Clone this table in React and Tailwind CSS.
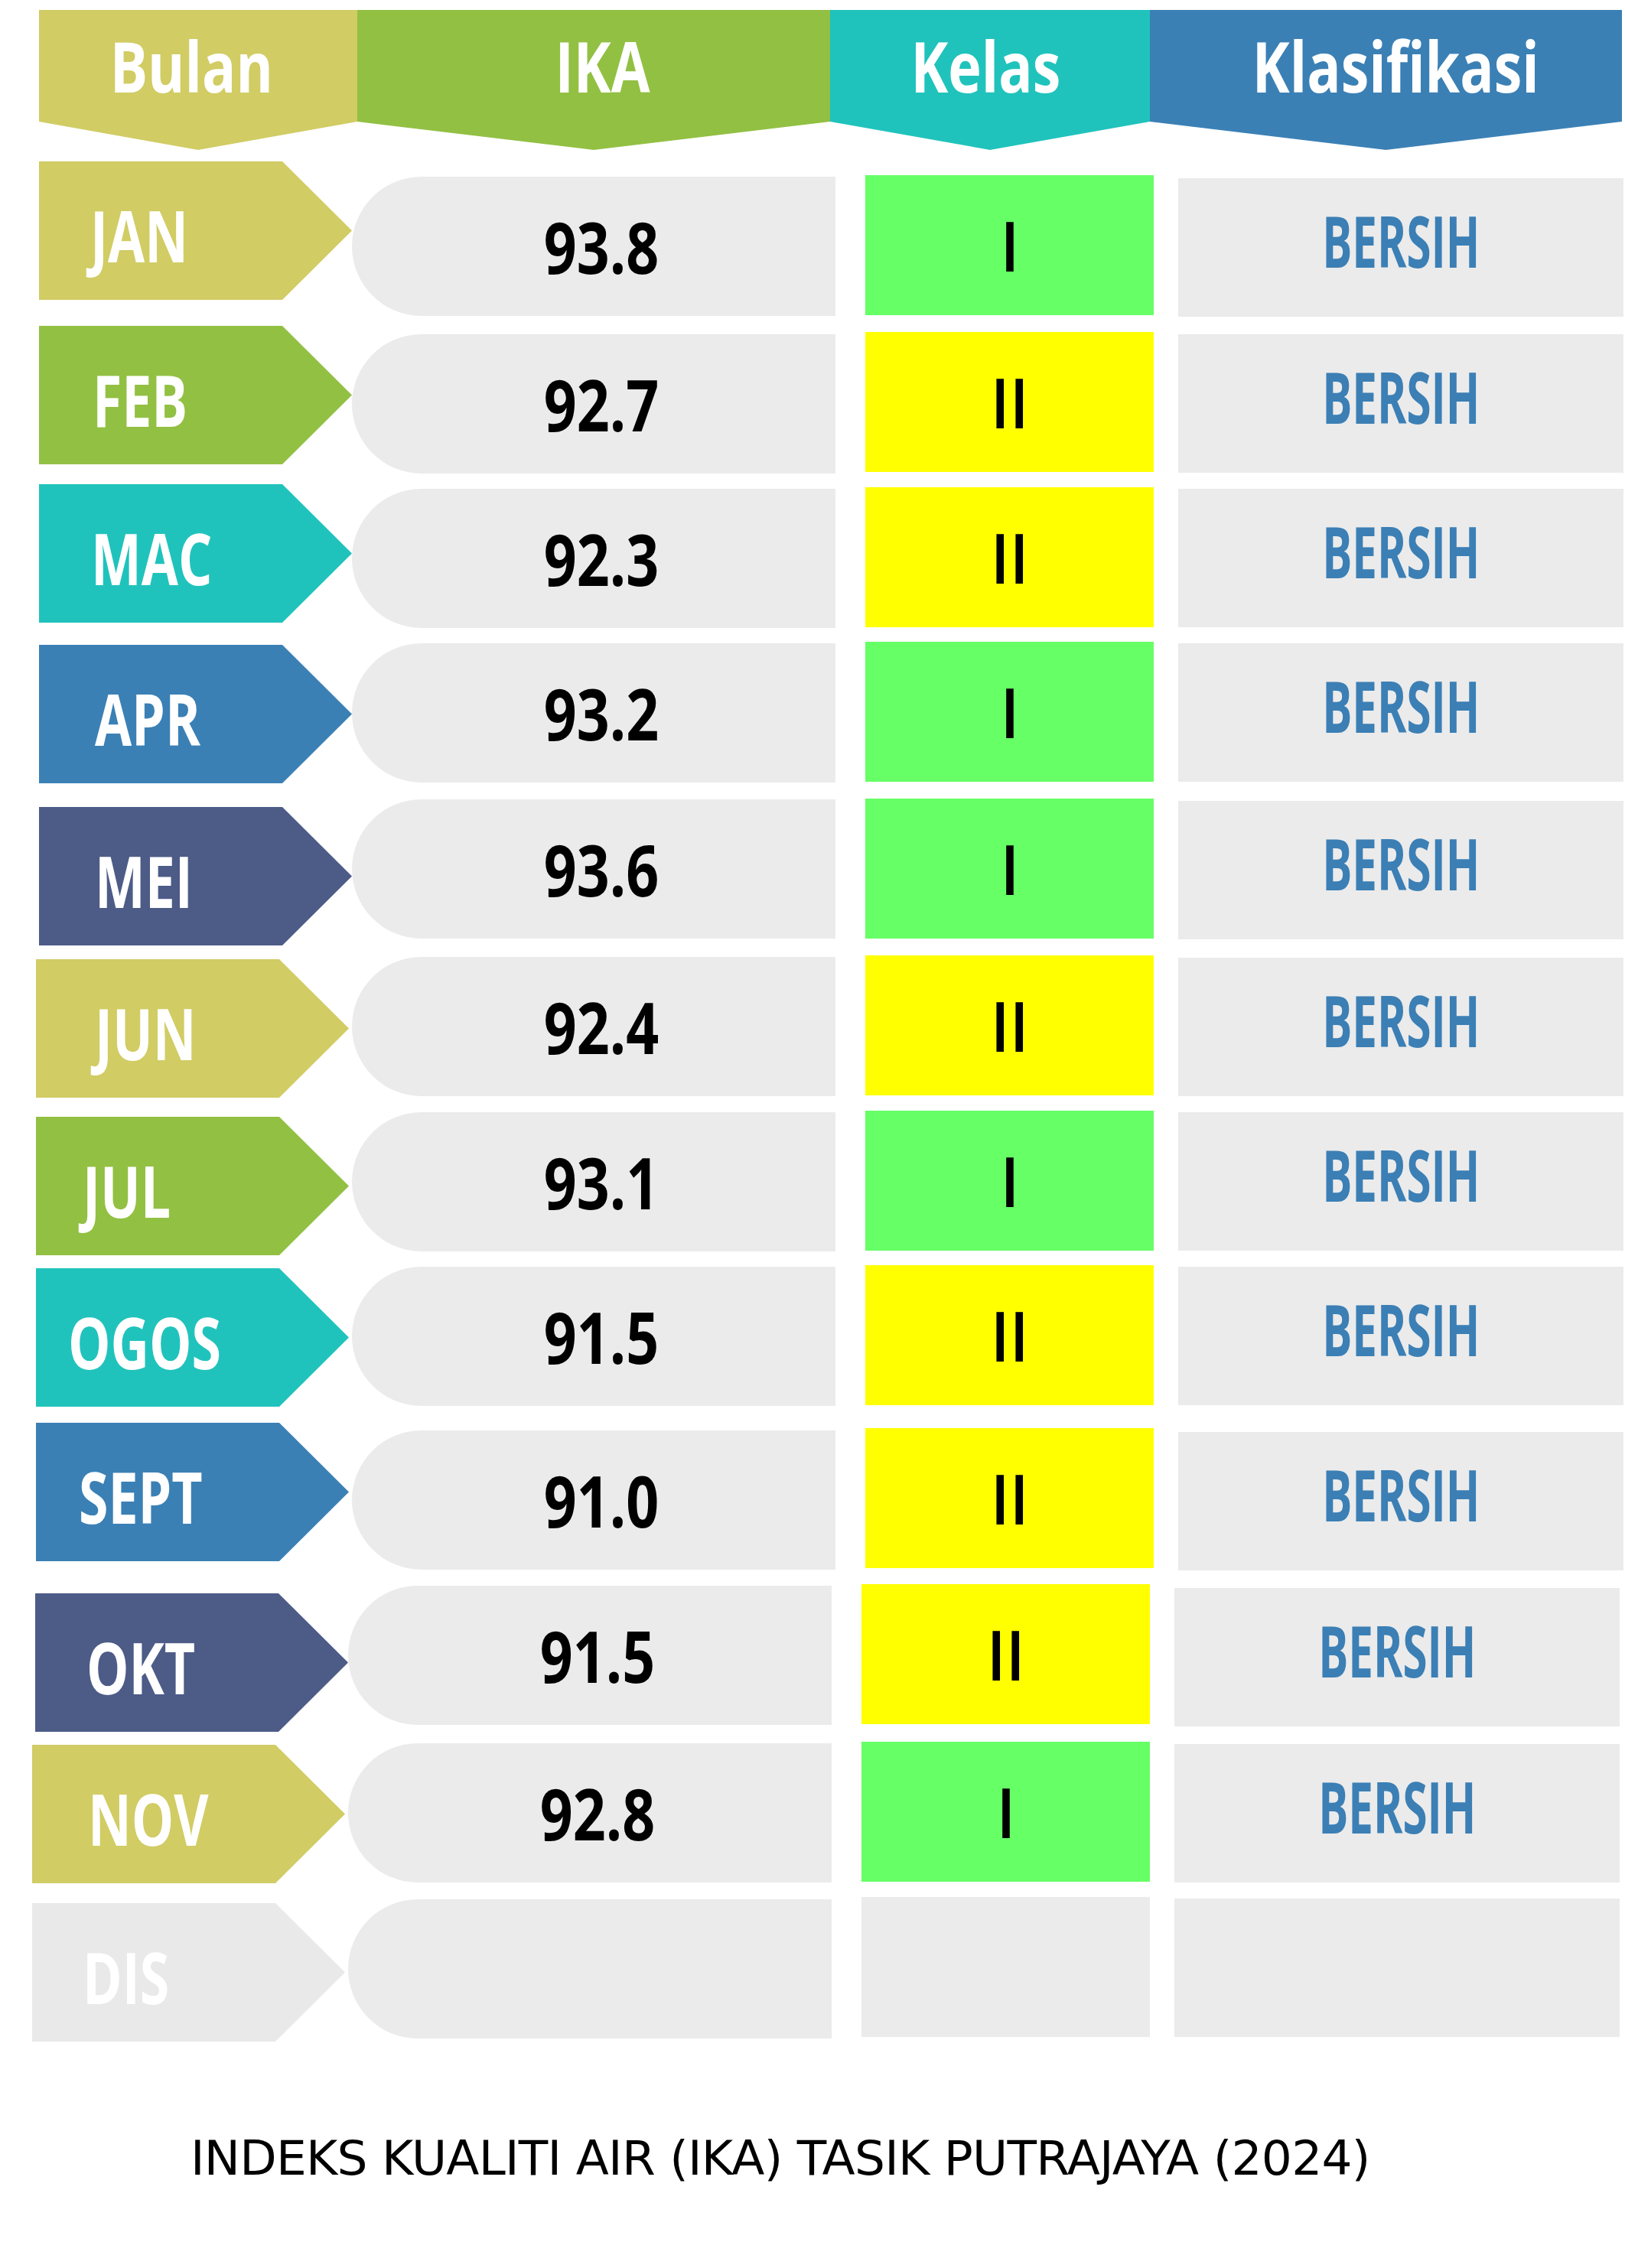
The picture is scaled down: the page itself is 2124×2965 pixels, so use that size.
import React from "react";

const headers = [
  { label: "Bulan", bg: "bg-[#d1cc64]", w: "w-[416px]", txt: "pr-[18px]" },
  { label: "IKA", bg: "bg-[#92c043]", w: "w-[618px]", txt: "pl-[24px]" },
  { label: "Kelas", bg: "bg-[#20c3bc]", w: "w-[418px]", txt: "pr-[12px]" },
  { label: "Klasifikasi", bg: "bg-[#3b80b5]", w: "w-[617px]", txt: "pl-[26px]" },
];

// offsets are per row because the original artwork isn't perfectly aligned
const rows = [
  { m: "JAN", bg: "bg-[#d1cc64]", v: "93.8", k: "I", wrap: "h-[215px]", tab: "ml-[51px] mt-0", txt: "pl-[67px]", pill: "ml-0 mt-[20px]", kel: "mt-[18px]", kls: "mt-[22px]" },
  { m: "FEB", bg: "bg-[#92c043]", v: "92.7", k: "II", wrap: "h-[207px]", tab: "ml-[51px] mt-0", txt: "pl-[70px]", pill: "ml-0 mt-[11px]", kel: "mt-[8px]", kls: "mt-[11px]" },
  { m: "MAC", bg: "bg-[#20c3bc]", v: "92.3", k: "II", wrap: "h-[206px]", tab: "ml-[51px] mt-0", txt: "pl-[68px]", pill: "ml-0 mt-[6px]", kel: "mt-[4px]", kls: "mt-[6px]" },
  { m: "APR", bg: "bg-[#3b80b5]", v: "93.2", k: "I", wrap: "h-[205px]", tab: "ml-[51px] mt-[4px]", txt: "pl-[73px]", pill: "ml-0 mt-[2px]", kel: "mt-0", kls: "mt-[2px]" },
  { m: "MEI", bg: "bg-[#4d5b87]", v: "93.6", k: "I", wrap: "h-[205px]", tab: "ml-[51px] mt-[11px]", txt: "pl-[73px]", pill: "ml-0 mt-[1px]", kel: "mt-0", kls: "mt-[3px]" },
  { m: "JUN", bg: "bg-[#d1cc64]", v: "92.4", k: "II", wrap: "h-[203px]", tab: "ml-[47px] mt-[5px]", txt: "pl-[77px]", pill: "ml-[4px] mt-[2px]", kel: "mt-0", kls: "mt-[3px]" },
  { m: "JUL", bg: "bg-[#92c043]", v: "93.1", k: "I", wrap: "h-[202px]", tab: "ml-[47px] mt-[8px]", txt: "pl-[61px]", pill: "ml-[4px] mt-[2px]", kel: "mt-0", kls: "mt-[2px]" },
  { m: "OGOS", bg: "bg-[#20c3bc]", v: "91.5", k: "II", wrap: "h-[206px]", tab: "ml-[47px] mt-[4px]", txt: "pl-[42px]", pill: "ml-[4px] mt-[2px]", kel: "mt-0", kls: "mt-[2px]" },
  { m: "SEPT", bg: "bg-[#3b80b5]", v: "91.0", k: "II", wrap: "h-[211px]", tab: "ml-[47px] mt-0", txt: "pl-[56px]", pill: "ml-[4px] mt-[10px]", kel: "mt-[7px]", kls: "mt-[12px]" },
  { m: "OKT", bg: "bg-[#4d5b87]", v: "91.5", k: "II", wrap: "h-[206px]", tab: "ml-[46px] mt-[12px]", txt: "pl-[67px]", pill: "ml-0 mt-[2px]", kel: "mt-0", kls: "mt-[5px]" },
  { m: "NOV", bg: "bg-[#d1cc64]", v: "92.8", k: "I", wrap: "h-[203px]", tab: "ml-[42px] mt-[4px]", txt: "pl-[73px]", pill: "ml-[4px] mt-[2px]", kel: "mt-0", kls: "mt-[3px]" },
  { m: "DIS", bg: "bg-[#e9e9e9]", v: "", k: "", wrap: "h-[190px]", tab: "ml-[42px] mt-[8px]", txt: "pl-[66px]", pill: "ml-[4px] mt-[3px]", kel: "mt-0", kls: "mt-[2px]" },
];

const kelasBg = (k) => {
  if (k === "I") return "bg-[#66ff66]";
  if (k === "II") return "bg-[#ffff00]";
  return "bg-[#ebebeb]";
};

const App = () => {
  return (
    <div className="w-[2124px] h-[2965px] bg-white pt-[13px] font-['Open_Sans',sans-serif]">
      {/* header */}
      <div className="flex ml-[51px]">
        {headers.map((h) => (
          <div
            key={h.label}
            className={`${h.w} ${h.bg} h-[183px] [clip-path:polygon(0_0,100%_0,100%_146px,50%_100%,0_146px)]`}
          >
            <div className={`h-[146px] flex items-center justify-center ${h.txt}`}>
              <span className="inline-block text-[92px] leading-none font-bold text-white scale-x-[0.8]">
                {h.label}
              </span>
            </div>
          </div>
        ))}
      </div>

      {/* rows */}
      <div className="mt-[15px]">
        {rows.map((r) => (
          <div key={r.m} className={`flex items-start ${r.wrap}`}>
            <div
              className={`${r.tab} ${r.bg} w-[409px] h-[181px] shrink-0 flex items-center pt-[12px] ${r.txt} [clip-path:polygon(0_0,318px_0,100%_50%,318px_100%,0_100%)]`}
            >
              <span className="inline-block origin-left text-[93px] leading-none font-bold text-white scale-x-[0.75]">
                {r.m}
              </span>
            </div>

            <div
              className={`${r.pill} w-[632px] h-[182px] shrink-0 rounded-l-full bg-[#ebebeb] flex items-center justify-center pl-[20px]`}
            >
              <span className="inline-block text-[94px] leading-none font-bold text-black scale-x-[0.8]">
                {r.v}
              </span>
            </div>

            <div
              className={`${r.kel} ml-[39px] w-[377px] h-[183px] shrink-0 ${kelasBg(r.k)} flex items-center justify-center`}
            >
              <span className="inline-block text-[91px] leading-none font-semibold text-black scale-x-[0.9]">
                {r.k}
              </span>
            </div>

            <div
              className={`${r.kls} ml-[32px] w-[582px] h-[181px] shrink-0 bg-[#ebebeb] flex items-center justify-center pb-[20px]`}
            >
              {r.v && (
                <span className="inline-block text-[94px] leading-none font-bold text-[#3b7fb5] scale-x-[0.62]">
                  BERSIH
                </span>
              )}
            </div>
          </div>
        ))}
      </div>

      {/* caption */}
      <div className="mt-[120px] pl-[249px] font-['DejaVu_Sans',sans-serif] text-[63px] leading-[63px] tracking-[-0.75px] text-black whitespace-nowrap">
        INDEKS KUALITI AIR (IKA) TASIK PUTRAJAYA (2024)
      </div>
    </div>
  );
};

export default App;
